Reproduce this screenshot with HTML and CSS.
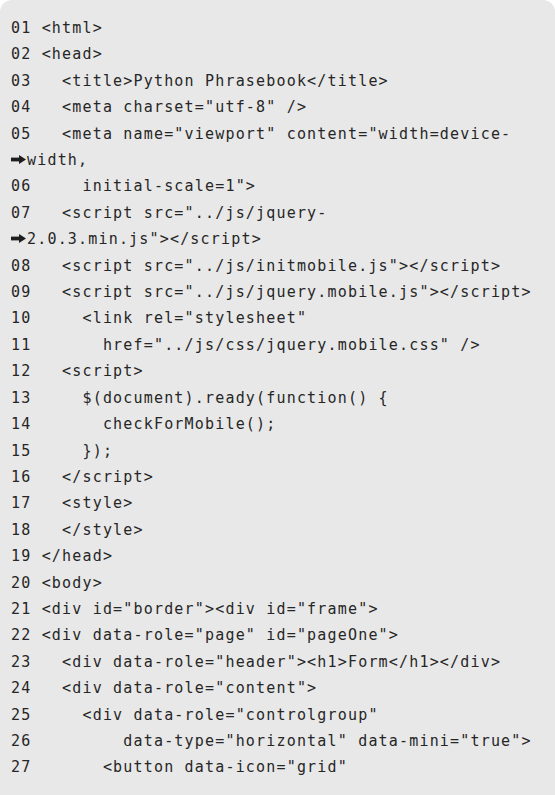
FILE: index.html
```html
<!DOCTYPE html>
<html>
<head>
<meta charset="utf-8">
<title>Listing</title>
<link rel="stylesheet" href="styles.css">
</head>
<body>
<div class="listing">
<pre class="code">01 &lt;html&gt;
02 &lt;head&gt;
03   &lt;title&gt;Python Phrasebook&lt;/title&gt;
04   &lt;meta charset="utf-8" /&gt;
05   &lt;meta name="viewport" content="width=device-
<span class="cont"><svg class="arrow" width="15" height="9" viewBox="0 0 15 9"><rect x="0" y="2.6" width="9" height="3.8" fill="#1e1e1e"/><polygon points="8,0 15,4.5 8,9" fill="#1e1e1e"/></svg></span>width,
06     initial-scale=1"&gt;
07   &lt;script src="../js/jquery-
<span class="cont"><svg class="arrow" width="15" height="9" viewBox="0 0 15 9"><rect x="0" y="2.6" width="9" height="3.8" fill="#1e1e1e"/><polygon points="8,0 15,4.5 8,9" fill="#1e1e1e"/></svg></span>2.0.3.min.js"&gt;&lt;/script&gt;
08   &lt;script src="../js/initmobile.js"&gt;&lt;/script&gt;
09   &lt;script src="../js/jquery.mobile.js"&gt;&lt;/script&gt;
10     &lt;link rel="stylesheet"
11       href="../js/css/jquery.mobile.css" /&gt;
12   &lt;script&gt;
13     $(document).ready(function() {
14       checkForMobile();
15     });
16   &lt;/script&gt;
17   &lt;style&gt;
18   &lt;/style&gt;
19 &lt;/head&gt;
20 &lt;body&gt;
21 &lt;div id="border"&gt;&lt;div id="frame"&gt;
22 &lt;div data-role="page" id="pageOne"&gt;
23   &lt;div data-role="header"&gt;&lt;h1&gt;Form&lt;/h1&gt;&lt;/div&gt;
24   &lt;div data-role="content"&gt;
25     &lt;div data-role="controlgroup"
26         data-type="horizontal" data-mini="true"&gt;
27       &lt;button data-icon="grid"
</pre>
</div>
</body>
</html>
```

FILE: styles.css
```css
html, body {
  margin: 0;
  padding: 0;
  background: #ffffff;
}

.listing {
  background: #e8e8e8;
  border-radius: 12px 12px 0 0;
  min-height: 830px;
  padding: 15px 0 0 11px;
  box-sizing: border-box;
  overflow: hidden;
}

.code {
  margin: 0;
  font-family: "DejaVu Sans Mono", monospace;
  font-size: 15px;
  letter-spacing: 1.18px;
  line-height: 26.4px;
  color: #262626;
  white-space: pre;
}

.cont {
  display: inline-block;
  width: 15px;
  margin-right: 1px;
}

.arrow {
  display: block;
  position: relative;
  top: -1px;
}
```
